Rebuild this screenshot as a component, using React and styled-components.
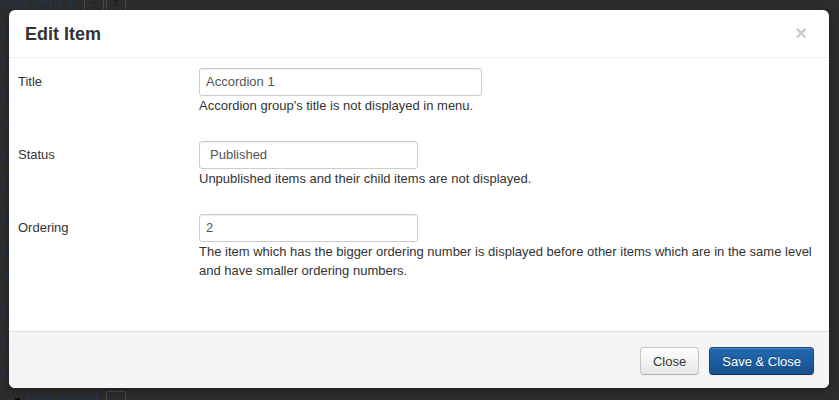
import React from "react";
import styled, { createGlobalStyle } from "styled-components";

const Global = createGlobalStyle`
  html, body { margin: 0; padding: 0; }
  body { font-family: "Liberation Sans", Arial, sans-serif; font-size: 13px; color: #333; }
`;

const Page = styled.div`
  position: relative;
  width: 839px;
  height: 400px;
  overflow: hidden;
  background: #2c2c2c;
`;

const BackList = styled.ul`
  list-style: none;
  margin: -14px 0 0 0;
  padding: 0 0 0 3px;
  display: flex;
  flex-direction: column;
`;

const BackRow = styled.li`
  height: 31px;
  display: flex;
  align-items: center;
  font-size: 16px;
  color: #1e3451;
  padding-left: ${(p) => p.$indent || 0}px;
  margin-top: ${(p) => p.$mt || 0}px;
`;

const BackBtn = styled.span`
  display: inline-flex;
  align-items: center;
  justify-content: center;
  box-sizing: border-box;
  width: 20px;
  height: 20px;
  border: 1px solid #474747;
  color: #1a1a1a;
  font-size: 12px;
  margin-left: ${(p) => p.$ml || 0}px;
`;

const Bullet = styled.span`
  width: 5px;
  height: 5px;
  background: #0d0d0d;
  margin-right: 7px;
`;

const Modal = styled.div`
  position: absolute;
  left: 9px;
  top: 10px;
  width: 820px;
  height: 378px;
  background: #fff;
  border-radius: 6px;
  display: flex;
  flex-direction: column;
  overflow: hidden;
  box-shadow: 0 3px 7px rgba(0, 0, 0, 0.3);
`;

const Header = styled.div`
  height: 48px;
  box-sizing: border-box;
  border-bottom: 1px solid #eee;
  padding: 0 22px 0 16px;
  display: flex;
  align-items: center;
  justify-content: space-between;
`;

const Heading = styled.h3`
  margin: 0;
  font-size: 18px;
  font-weight: bold;
  color: #333;
  line-height: 22px;
`;

const CloseX = styled.span`
  font-size: 20px;
  font-weight: bold;
  color: #000;
  opacity: 0.2;
  line-height: 20px;
  margin-top: -2px;
`;

const Body = styled.div`
  flex: 1;
  padding: 10px 9px;
  display: flex;
  flex-direction: column;
  gap: 26px;
`;

const Group = styled.div`
  display: grid;
  grid-template-columns: 181px 1fr;
`;

const Label = styled.label`
  line-height: 28px;
  color: #333;
`;

const Controls = styled.div`
  display: flex;
  flex-direction: column;
`;

const Field = styled.div`
  box-sizing: border-box;
  width: ${(p) => p.$w}px;
  height: 28px;
  border: 1px solid #ccc;
  border-radius: 3px;
  box-shadow: inset 0 1px 1px rgba(0, 0, 0, 0.075);
  padding: 0 ${(p) => p.$pad || 6}px;
  line-height: 26px;
  color: #555;
`;

const Help = styled.p`
  margin: 0;
  line-height: 19px;
  color: #333;
`;

const Footer = styled.div`
  height: 57px;
  box-sizing: border-box;
  border-top: 1px solid #ddd;
  background: #f5f5f5;
  padding: 0 15px 0 0;
  display: flex;
  align-items: center;
  justify-content: flex-end;
  gap: 10px;
`;

const Button = styled.button`
  font-family: "Liberation Sans", Arial, sans-serif;
  font-size: 13px;
  height: 28px;
  padding: 0 12px;
  border-radius: 4px;
  cursor: pointer;
  border: 1px solid ${(p) => (p.$primary ? "#15497c" : "#c5c5c5")};
  border-bottom-color: ${(p) => (p.$primary ? "#0f355a" : "#b3b3b3")};
  color: ${(p) => (p.$primary ? "#fff" : "#333")};
  background: ${(p) =>
    p.$primary
      ? "linear-gradient(to bottom, #2269b2, #17508b)"
      : "linear-gradient(to bottom, #ffffff, #e6e6e6)"};
  box-shadow: inset 0 1px 0 rgba(255, 255, 255, 0.2), 0 1px 2px rgba(0, 0, 0, 0.05);
  text-shadow: ${(p) => (p.$primary ? "0 -1px 0 rgba(0,0,0,0.25)" : "0 1px 1px rgba(255,255,255,0.75)")};
  margin-top: 2px;
`;

const rows = ["List", "List", "List", "Title", "List", "List", "List", "List", "Title", "List", "List", "List"];

export default function App() {
  return (
    <>
      <Global />
      <Page>
        <BackList>
          <BackRow>
            List item 1<BackBtn $ml={8}>-</BackBtn>
            <BackBtn $ml={2}>x</BackBtn>
          </BackRow>
          {rows.map((r, i) => (
            <BackRow key={i}>{r}</BackRow>
          ))}
          <BackRow $indent={12} $mt={-4}>
            <Bullet />
            List item 4<BackBtn $ml={6} />
          </BackRow>
        </BackList>
        <Modal>
          <Header>
            <Heading>Edit Item</Heading>
            <CloseX>×</CloseX>
          </Header>
          <Body>
            <Group>
              <Label>Title</Label>
              <Controls>
                <Field $w={283}>Accordion 1</Field>
                <Help>Accordion group's title is not displayed in menu.</Help>
              </Controls>
            </Group>
            <Group>
              <Label>Status</Label>
              <Controls>
                <Field $w={219} $pad={10}>Published</Field>
                <Help>Unpublished items and their child items are not displayed.</Help>
              </Controls>
            </Group>
            <Group>
              <Label>Ordering</Label>
              <Controls>
                <Field $w={219}>2</Field>
                <Help>
                  The item which has the bigger ordering number is displayed before other items which are in the same level and have smaller ordering numbers.
                </Help>
              </Controls>
            </Group>
          </Body>
          <Footer>
            <Button>Close</Button>
            <Button $primary>Save &amp; Close</Button>
          </Footer>
        </Modal>
      </Page>
    </>
  );
}
